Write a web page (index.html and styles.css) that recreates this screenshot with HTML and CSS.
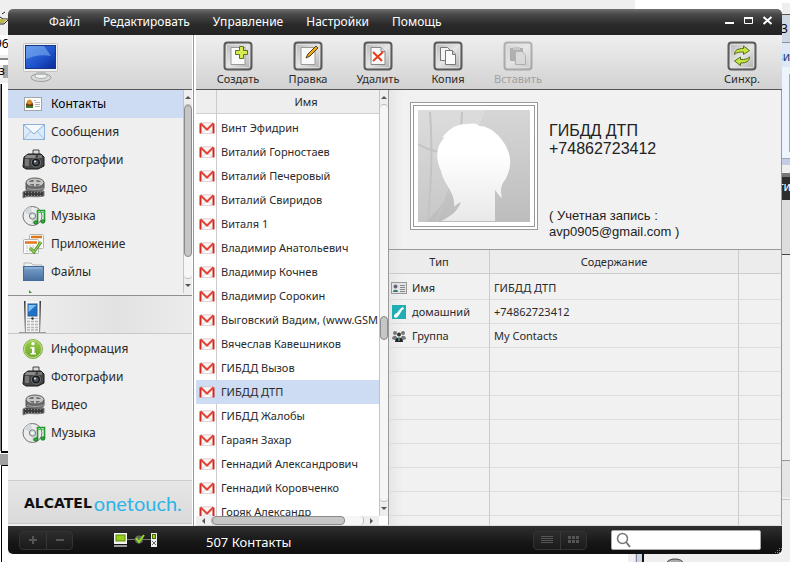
FILE: index.html
```html
<!DOCTYPE html>
<html lang="ru">
<head>
<meta charset="utf-8">
<title>Контакты</title>
<link rel="stylesheet" href="styles.css">
</head>
<body>
<svg class="defs" aria-hidden="true">
  <defs>
    <linearGradient id="gScreen" x1="0" y1="0" x2="1" y2="1"><stop offset="0" stop-color="#3f7fe6"/><stop offset=".6" stop-color="#1c4fc8"/><stop offset="1" stop-color="#0b2a94"/></linearGradient>
    <linearGradient id="gFolder" x1="0" y1="0" x2="0" y2="1"><stop offset="0" stop-color="#7ba0cc"/><stop offset="1" stop-color="#47709f"/></linearGradient>
    <linearGradient id="gTool" x1="0" y1="0" x2="1" y2="1"><stop offset="0" stop-color="#b4b4b4"/><stop offset=".5" stop-color="#e6e6e6"/><stop offset="1" stop-color="#a8a8a8"/></linearGradient>
    <linearGradient id="gPhoto" x1="0" y1="0" x2="0" y2="1"><stop offset="0" stop-color="#d6d6d6"/><stop offset="1" stop-color="#bdbdbd"/></linearGradient>
    <linearGradient id="gHead" x1="0" y1="0" x2="0" y2="1"><stop offset=".3" stop-color="#fff"/><stop offset="1" stop-color="#e9e9e9"/></linearGradient>
    <linearGradient id="gGreen" x1="0" y1="0" x2="0" y2="1"><stop offset="0" stop-color="#9ccc4a"/><stop offset="1" stop-color="#6aa32a"/></linearGradient>
  </defs>
  <symbol id="i-card" viewBox="0 0 24 22"><rect x="2.500" y="4.500" width="17" height="13" fill="#fff" stroke="#a5a5a5"/><rect x="4" y="13" width="7" height="2" fill="#3c7a30"/><path d="M4 13c0-3 1-3 1-5h5c0 2 2 3 1 5z" fill="#6b3a10"/><circle cx="7.500" cy="9" r="2.500" fill="#d98e2b"/><path d="M12 7.500h2m-1 2h5m-5 2h5m-5 2h5" stroke="#b4b4b4"/></symbol>
  <symbol id="i-mail" viewBox="0 0 24 22"><rect x="1.500" y="3.500" width="21" height="15" fill="#dcebf9" stroke="#8db2d8"/><path d="M2 18l7-8m13 8l-7-8" stroke="#a3c3e3" fill="none"/><path d="M2 4l10 9 10-9" fill="#f4f9fe" stroke="#84acd6"/></symbol>
  <symbol id="i-camera" viewBox="0 0 24 22"><path d="M11 5V1h6v4" fill="#ddd" stroke="#444"/><path d="M2 8l4-3h13l3 3v9l-6 3H4l-3-2z" fill="#454745" stroke="#161616"/><path d="M3 8l2-2h9l-1 3H3z" fill="#8a8d8a"/><rect x="3" y="10" width="4" height="7" fill="#777"/><path d="M16 6h4v3h-4z" fill="#777"/><circle cx="14" cy="13.500" r="4.500" fill="#151515" stroke="#777"/><circle cx="14" cy="13.500" r="2.500" fill="#46525e"/><circle cx="13" cy="12.500" r="1" fill="#eee"/></symbol>
  <symbol id="i-film" viewBox="0 0 24 22"><path d="M4 6v6c0 3 18 4 18-1V6z" fill="#6c6d6b" stroke="#555"/><ellipse cx="13" cy="5.500" rx="9" ry="4.500" fill="#c5c7c3" stroke="#5a5a5a"/><path d="M7 5c1-2 3-2 5-2l-1 2zm7-2c3 0 4 1 5 2h-4zM8 7h4v2c-2 0-4-1-4-2zm6 0h4c-1 1-2 2-4 2z" fill="#6c6c6c"/><path d="M5 11c2 2 14 2 17 0" stroke="#a5a5a5" fill="none"/><path d="M1 15c4-3 9 0 21-1v5c-9 2-16-1-21 2z" fill="#3a3a3a" stroke="#7e7e7e"/><path d="M3 15.500c6-1 10 1 18 0M3 19c6-2 10 1 18-1" stroke="#a9a9a9" stroke-dasharray="1 2" fill="none"/></symbol>
  <symbol id="i-music" viewBox="0 0 24 22"><circle cx="10.500" cy="11" r="9.500" fill="#ececec" stroke="#747474"/><path d="M10.500 11L2 7c1-3 4-5 7-5zM10.500 11l7 5c-2 3-5 4-8 3z" fill="#d2d7da"/><circle cx="10.500" cy="11" r="3.200" fill="#cfd5dd" stroke="#848484"/><circle cx="10.500" cy="11" r="1.300" fill="#fff"/><path d="M15.500 17V5.500h7V16" fill="none" stroke="#1f9a2a" stroke-width="1.600"/><path d="M15.500 7.500h7" stroke="#45c84c"/><ellipse cx="13.800" cy="17.500" rx="2" ry="1.600" fill="#2fb137" stroke="#0b7014"/><ellipse cx="20.800" cy="16.500" rx="2" ry="1.600" fill="#2fb137" stroke="#0b7014"/></symbol>
  <symbol id="i-apps" viewBox="0 0 24 22"><rect x="7.500" y="1.500" width="14" height="14" rx="1" fill="#fafafa" stroke="#b5b5b0"/><path d="M9 4h11" stroke="#e07818" stroke-width="2.500"/><rect x="1.500" y="6.500" width="15" height="14" rx="1" fill="#fafafa" stroke="#b5b5b0"/><path d="M3 9.500h12" stroke="#e07818" stroke-width="2.500"/><path d="M4 13h9m-9 2h9m-9 3h5" stroke="#c5c5c0" stroke-dasharray="2 1"/><path d="M8 15l4 4 7-10" fill="none" stroke="#4a8c1c" stroke-width="3"/><path d="M8 15l4 4 7-10" fill="none" stroke="#9ed760" stroke-width="1.200"/></symbol>
  <symbol id="i-folder" viewBox="0 0 24 22"><path d="M2 5V2h7l2 2h9v3" fill="#f2f2f0" stroke="#b5b5b0"/><rect x="1.500" y="5.500" width="20" height="14" fill="url(#gFolder)" stroke="#426a9c"/><path d="M3 7h17" stroke="#a5c2e2"/></symbol>
  <symbol id="i-info" viewBox="0 0 24 22"><circle cx="11" cy="11" r="9.500" fill="url(#gGreen)" stroke="#86b04a"/><circle cx="11" cy="11" r="8.500" fill="none" stroke="#bfe08a"/><circle cx="11" cy="5.800" r="1.700" fill="#fff"/><path d="M8.500 9h4v6h1.500v1.500H8.500V15H10v-4.500H8.500z" fill="#fff"/></symbol>
  <symbol id="i-gmail" viewBox="0 0 16 12"><rect x="1" y="1" width="14" height="10" fill="#f6f6f6"/><path d="M3 11l5-4 5 4" fill="#fff" stroke="#c9c9c9" stroke-width=".8"/><path d="M2 .8h12M3 11.500h10" stroke="#dcc4c2" stroke-width=".8"/><path d="M1.500 11.500V1.500M14.500 1.500v10" stroke="#cf2a20" stroke-width="2"/><path d="M1.500 1.200L8 7.500l6.500-6.300" fill="none" stroke="#e2463a" stroke-width="2"/></symbol>
  <symbol id="tool" viewBox="0 0 30 30"><rect x="1.500" y="1.500" width="27" height="27" rx="3" fill="url(#gTool)" stroke="#5b5b5b" stroke-width="2"/><rect x="3.500" y="3.500" width="23" height="23" rx="1" fill="none" stroke="#dedede"/></symbol>
</svg>

<svg class="behind behind-left" aria-hidden="true" width="8" height="562">
  <rect width="8" height="562" fill="#fff"/><rect width="8" height="35" fill="#efefef"/>
  <path d="M0 17l3 2h5M0 24h4l4-4M2 14l3-2" fill="none" stroke="#222"/><path d="M0 19h7l-3 4H0z" fill="#b9b84d"/>
  <rect y="55" width="8" height="5" fill="#eee"/><rect y="58" width="8" height="2" fill="#888"/><rect y="65" width="8" height="18" fill="#efefef"/><rect x="3" y="65" width="5" height="13" fill="#a6a6a6"/>
  <text x="-5" y="48">96</text><text x="-1" y="75">з</text>
  <rect x="1" y="84" width="1" height="367" fill="#000"/><rect y="84" width="1" height="367" fill="#888"/>
  <rect x="1" y="451" width="7" height="2" fill="#000"/><rect y="454" width="8" height="11" fill="#a0a0a0"/><path d="M1.500 562v-96.500H8" fill="none" stroke="#000"/>
</svg>
<svg class="behind behind-right" aria-hidden="true" width="155" height="562">
  <rect width="155" height="562" fill="#fff"/><rect x="147" y="3" width="8" height="11" fill="#eee"/>
  <rect x="147" y="14" width="8" height="29" fill="#cdd6e1"/><rect x="147" y="14" width="8" height="1" fill="#555"/><rect x="147" y="43" width="8" height="115" fill="#dce8f5"/><rect x="147" y="42" width="8" height="1" fill="#8794a5"/>
  <rect x="147" y="67" width="8" height="92" fill="#edf4fc"/><path d="M154.500 74v78" stroke="#9ab"/><rect x="147" y="159" width="8" height="6" fill="#c3cde2"/><rect x="147" y="158" width="8" height="1" fill="#99a5b8"/>
  <rect x="147" y="165" width="8" height="397" fill="#efefef"/><rect x="147" y="173" width="8" height="27" fill="#2d2d2d"/><rect x="147" y="173" width="8" height="4" fill="#777"/><rect x="147" y="200" width="8" height="54" fill="#ddd"/><rect x="147" y="254" width="8" height="1" fill="#444"/>
  <rect x="147" y="460" width="8" height="1" fill="#999"/><rect x="147" y="461" width="8" height="36" fill="#e5e5e5"/><rect x="147" y="499" width="8" height="1" fill="#c5c5c5"/>
  <text x="146" y="33">3</text><text x="141" y="61" class="blue">ви</text><text x="143" y="191" class="light">ти</text>
  <rect y="554" width="155" height="8" fill="#efefef"/><rect y="554" width="7" height="8" fill="#c9d6ea"/><path d="M1.500 554v8" stroke="#889"/><rect x="7" y="554" width="2" height="8" fill="#111"/><ellipse cx="40" cy="563" rx="8" ry="4" fill="#aaa" stroke="#444"/>
</svg>

<div class="window">
  <header class="titlebar">
    <nav class="menu">
      <button type="button">Файл</button><button type="button">Редактировать</button><button type="button">Управление</button><button type="button">Настройки</button><button type="button">Помощь</button>
    </nav>
    <div class="controls">
      <button type="button" aria-label="Свернуть"><svg width="11" height="9"><path d="M1 7h9" stroke="#fff" stroke-width="2"/></svg></button>
      <button type="button" aria-label="Развернуть"><svg width="11" height="9"><path d="M1.500 1v6.500h8V1" fill="none" stroke="#fff"/><path d="M1 2h9" stroke="#fff" stroke-width="2"/></svg></button>
      <button type="button" aria-label="Закрыть"><svg width="11" height="9"><path d="M1.500 1l8 7m0-7l-8 7" stroke="#fff" stroke-width="2"/></svg></button>
    </div>
  </header>

  <div class="body">
    <aside class="sidebar">
      <div class="device-head">
        <svg width="38" height="42" viewBox="0 0 38 42"><ellipse cx="19" cy="35.500" rx="10" ry="4" fill="#d5d8d9" stroke="#9da0a1"/><ellipse cx="19" cy="34" rx="6" ry="2.500" fill="#f2f2f2" stroke="#aaa"/><path d="M15 29h8l1 4H14z" fill="#b9bcbd"/><rect x="1.500" y="1.500" width="34" height="28" rx="1" fill="#f2f2f2" stroke="#c2c2c2"/><rect x="3.500" y="3.500" width="30" height="23" fill="url(#gScreen)" stroke="#16378a"/><path d="M4 4h18l7 10c-10-2-17 0-25 3z" fill="#8fbcf5" opacity=".5"/></svg>
      </div>
      <div class="nav-scroll">
        <ul class="nav">
          <li><a href="#" class="active"><svg class="ic"><use href="#i-card"/></svg>Контакты</a></li>
          <li><a href="#"><svg class="ic"><use href="#i-mail"/></svg>Сообщения</a></li>
          <li><a href="#"><svg class="ic"><use href="#i-camera"/></svg>Фотографии</a></li>
          <li><a href="#"><svg class="ic"><use href="#i-film"/></svg>Видео</a></li>
          <li><a href="#"><svg class="ic"><use href="#i-music"/></svg>Музыка</a></li>
          <li><a href="#"><svg class="ic"><use href="#i-apps"/></svg>Приложение</a></li>
          <li><a href="#"><svg class="ic"><use href="#i-folder"/></svg>Файлы</a></li>
          <li class="peek"><svg width="6" height="4"><path d="M1 0l4 4H1z" fill="#349534"/></svg></li>
        </ul>
        <div class="vbar"><i class="up"></i><div class="track"><b class="thumb nav-thumb"></b></div><i class="down"></i></div>
      </div>
      <div class="phone-head">
        <svg width="28" height="34" viewBox="0 0 28 34"><path d="M0 32.500h27" stroke="#9b9b9b"/><path d="M5 1h17l-1 31H6z" fill="#333"/><path d="M6.500 1h14v31h-14z" fill="#f4f4f4"/><rect x="9" y="4" width="9" height="12" fill="#1f72c8" stroke="#2a5c98"/><path d="M9.500 5h8l-8 7z" fill="#7cc0f2"/><path d="M8 21.500h11M8 24.500h11M8 27.500h11M8 30h11" stroke="#b4b4b4" stroke-width="1.500" stroke-dasharray="3 1"/><path d="M8 18.500h11" stroke="#bbb"/><circle cx="13.500" cy="18.500" r="1.200" fill="#333"/></svg>
      </div>
      <ul class="nav phone-nav">
        <li><a href="#"><svg class="ic"><use href="#i-info"/></svg>Информация</a></li>
        <li><a href="#"><svg class="ic"><use href="#i-camera"/></svg>Фотографии</a></li>
        <li><a href="#"><svg class="ic"><use href="#i-film"/></svg>Видео</a></li>
        <li><a href="#"><svg class="ic"><use href="#i-music"/></svg>Музыка</a></li>
      </ul>
      <div class="brand"><span class="alcatel">ALCATEL</span><span class="onetouch">onetouch.</span></div>
    </aside>

    <main class="main">
      <div class="toolbar">
        <button type="button"><svg width="30" height="30"><use href="#tool"/><path d="M8 6.500h14v17H8z" fill="#fafafa" stroke="#999"/><path d="M16.500 5.500h4v4h4v4h-4v4h-4v-4h-4v-4h4z" fill="#d7ea52" stroke="#5f7020"/></svg>Создать</button>
        <button type="button"><svg width="30" height="30"><use href="#tool"/><path d="M8 6.500h14v17H8z" fill="#fafafa" stroke="#999"/><path d="M13 17l2-4 8-8 2 2-8 8z" fill="#f0a81c" stroke="#54420f"/></svg>Правка</button>
        <button type="button"><svg width="30" height="30"><use href="#tool"/><path d="M8 6.500h10l4 4v13H8z" fill="#fafafa" stroke="#888"/><path d="M18 6.500v4h4" fill="#ddd" stroke="#888"/><path d="M10 11l9 9m1-9L10 20" stroke="#e8401c" stroke-width="2"/></svg>Удалить</button>
        <button type="button"><svg width="30" height="30"><use href="#tool"/><path d="M7.500 6.500h7l3 3v10h-10z" fill="#f4f4f4" stroke="#777"/><path d="M12.500 9.500h7l3 4v10h-10z" fill="#fafafa" stroke="#777"/><path d="M19.500 9.500v4h3" fill="#ccc" stroke="#777"/></svg>Копия</button>
        <button type="button" disabled><svg width="30" height="30"><use href="#tool"/><path d="M7.500 7.500h12v12h-12z" fill="#666" stroke="#555"/><path d="M10 6h7v3h-7z" fill="#999"/><path d="M12.500 10.500h7l3 4v9h-10z" fill="#ccc" stroke="#666"/></svg>Вставить</button>
        <button type="button" class="sync"><svg width="30" height="30"><use href="#tool"/><path d="M7.500 13.500c0-4 3-6 9-6V5l6 4.500-6 4v-2.500c-4 0-7 0-9 2.500z" fill="#c4e63f" stroke="#586d18"/><path d="M22.500 16c0 4-3 6-9 6v2.500l-6-4.500 6-4v2.500c4 0 7 0 9-2.500z" fill="#c4e63f" stroke="#586d18"/></svg>Синхр.</button>
      </div>
      <div class="content">
        <section class="list">
          <div class="list-area">
            <table class="people">
              <thead><tr><th class="src"></th><th class="title">Имя</th></tr></thead>
              <tbody>
                <tr><td><svg><use href="#i-gmail"/></svg></td><td>Винт Эфидрин</td></tr>
                <tr><td><svg><use href="#i-gmail"/></svg></td><td>Виталий Горностаев</td></tr>
                <tr><td><svg><use href="#i-gmail"/></svg></td><td>Виталий Печеровый</td></tr>
                <tr><td><svg><use href="#i-gmail"/></svg></td><td>Виталий Свиридов</td></tr>
                <tr><td><svg><use href="#i-gmail"/></svg></td><td>Виталя 1</td></tr>
                <tr><td><svg><use href="#i-gmail"/></svg></td><td>Владимир Анатольевич</td></tr>
                <tr><td><svg><use href="#i-gmail"/></svg></td><td>Владимир Кочнев</td></tr>
                <tr><td><svg><use href="#i-gmail"/></svg></td><td>Владимир Сорокин</td></tr>
                <tr><td><svg><use href="#i-gmail"/></svg></td><td>Выговский Вадим, (www.GSM</td></tr>
                <tr><td><svg><use href="#i-gmail"/></svg></td><td>Вячеслав Кавешников</td></tr>
                <tr><td><svg><use href="#i-gmail"/></svg></td><td>ГИБДД Вызов</td></tr>
                <tr class="selected"><td><svg><use href="#i-gmail"/></svg></td><td>ГИБДД ДТП</td></tr>
                <tr><td><svg><use href="#i-gmail"/></svg></td><td>ГИБДД Жалобы</td></tr>
                <tr><td><svg><use href="#i-gmail"/></svg></td><td>Гараян Захар</td></tr>
                <tr><td><svg><use href="#i-gmail"/></svg></td><td>Геннадий Александрович</td></tr>
                <tr><td><svg><use href="#i-gmail"/></svg></td><td>Геннадий Коровченко</td></tr>
                <tr><td><svg><use href="#i-gmail"/></svg></td><td>Горяк Александр</td></tr>
              </tbody>
            </table>
          </div>
          <div class="vbar"><i class="up"></i><div class="track"><b class="thumb list-thumb"></b></div><i class="down"></i></div>
          <div class="hbar"><i class="left"></i><div class="track"><b class="thumb"></b></div><i class="right"></i></div>
        </section>
        <section class="detail">
          <div class="profile">
            <div class="photo"><svg viewBox="0 0 112 112"><rect width="112" height="112" fill="url(#gPhoto)"/><path d="M0 0h67C54 35 42 80 8 112H0z" fill="#fff" opacity=".16"/><path d="M12 2c3 40 1 70-2 108M44 2C42 50 34 80 18 110M0 34c15 9 40 14 60 2" fill="none" stroke="#c3c3c3" stroke-width="2"/><path d="M23 111c9-4 17-10 20-19-4 2-5 3-7 5 2-14-10-22-13-36C17 48 18 36 27 27l-3 1c6-8 13-14 25-14 7-1 10-1 12 2 15 0 29 18 31 32 1 10-2 18-7 25-3 6-2 9-1 15-4-3-5-6-7-8v31z" fill="url(#gHead)"/></svg></div>
            <div class="who">
              <p class="name">ГИБДД ДТП<br>+74862723412</p>
              <p class="account">( Учетная запись :<br>avp0905@gmail.com )</p>
            </div>
          </div>
          <table class="fields">
            <colgroup><col class="c-type"><col><col class="c-end"></colgroup>
            <thead><tr><th>Тип</th><th>Содержание</th><th></th></tr></thead>
            <tbody>
              <tr class="first"><td><span class="kind"><svg width="16" height="14"><rect x=".5" y="1.500" width="15" height="11" fill="#e4e4e4" stroke="#999"/><path d="M2 11c0-3 5-3 5 0z" fill="#377"/><circle cx="4.500" cy="5.500" r="2" fill="#667"/><path d="M9 4.500h5M9 6.500h5M9 8.500h5M9 10.500h5" stroke="#888"/></svg>Имя</span></td><td>ГИБДД ДТП</td><td></td></tr>
              <tr><td><span class="kind"><svg width="16" height="14"><rect x="1" width="14" height="14" fill="#20aeb4"/><path d="M3 12c0-3 1-3 3-4 2-2 3-5 6-6l1 2c-3 1-3 4-5 6-1 2-2 2-3 3z" fill="#fff"/></svg>домашний</span></td><td>+74862723412</td><td></td></tr>
              <tr><td><span class="kind"><svg width="16" height="14"><circle cx="4" cy="4" r="2" fill="#777"/><circle cx="12" cy="4" r="2" fill="#777"/><path d="M1 10c0-4 5-4 5-1h4c0-3 5-3 5 1l-3 1H4z" fill="#777"/><circle cx="8" cy="5.500" r="2" fill="#333"/><path d="M4 13c0-6 8-6 8 0z" fill="#222"/><path d="M8 8v4" stroke="#6cc"/></svg>Группа</span></td><td>My Contacts</td><td></td></tr>
              <tr><td></td><td></td><td></td></tr><tr><td></td><td></td><td></td></tr><tr><td></td><td></td><td></td></tr><tr><td></td><td></td><td></td></tr><tr><td></td><td></td><td></td></tr><tr><td></td><td></td><td></td></tr><tr><td></td><td></td><td></td></tr><tr><td></td><td></td><td></td></tr>
            </tbody>
          </table>
        </section>
      </div>
    </main>
  </div>

  <footer class="status">
    <div class="pair">
      <button type="button" aria-label="Добавить"><svg width="10" height="10"><path d="M5 1v8M1 5h8" stroke="#555" stroke-width="2"/></svg></button><button type="button" aria-label="Убрать"><svg width="10" height="10"><path d="M1 5h8" stroke="#555" stroke-width="2"/></svg></button>
    </div>
    <svg class="link" width="46" height="16"><path d="M14 7.500h26" stroke="#777"/><rect x="1" y="1" width="13" height="11" fill="#f4f4f4"/><rect x="3" y="3" width="9" height="6" fill="#98cf1b" stroke="#5b8a0c"/><path d="M1 14h13" stroke="#999" stroke-width="2"/><circle cx="26" cy="7.500" r="4" fill="#666"/><path d="M23 6l3 4 5-7" fill="none" stroke="#8fe01a" stroke-width="2"/><rect x="38" y="1" width="6" height="14" fill="#eee"/><rect x="39.500" y="2.500" width="3" height="4" fill="#98cf1b" stroke="#467008"/><path d="M39 9l4 4m0-4l-4 4" stroke="#666"/></svg>
    <span class="count">507 Контакты</span>
    <div class="pair views">
      <button type="button" aria-label="Список"><svg width="12" height="8"><path d="M0 .5h12M0 2.500h12M0 4.500h12M0 6.500h12" stroke="#555"/></svg></button><button type="button" aria-label="Сетка"><svg width="11" height="8"><path d="M0 1.500h11M0 5.500h11" stroke="#555" stroke-width="3" stroke-dasharray="3 1"/></svg></button>
    </div>
    <label class="search"><svg width="16" height="16"><circle cx="6.500" cy="6.500" r="5" fill="none" stroke="#777" stroke-width="1.500"/><path d="M10 10l4 5" stroke="#777" stroke-width="2"/></svg><input type="search" aria-label="Поиск"></label>
    <svg class="grip" width="8" height="8"><path d="M1 6.500h7M3 4.500h5M5 2.500h3" stroke="#888" stroke-dasharray="1 1"/></svg>
  </footer>
</div>
</body>
</html>
```
FILE: styles.css
```css
* { box-sizing: border-box; }
body {
  margin: 0;
  height: 100vh;
  padding: 9px 8px 8px;
  background: #efefef;
  font: 11px/16px "Noto Sans", "Open Sans", sans-serif;
  color: #2a2a2a;
  overflow: hidden;
  position: relative;
}
p, ul { margin: 0; padding: 0; }
li { list-style: none; }
button { border: 0; padding: 0; background: none; font: inherit; color: inherit; }
svg { display: block; flex: none; }
.defs { position: absolute; width: 0; height: 0; }
.behind { position: absolute; top: 0; font: 12px "Noto Sans", sans-serif; }
.behind-left { left: 0; }
.behind-right { right: 0; }
.behind .blue { fill: #28417f; }
.behind .light { fill: #fff; }
body::after {
  content: "";
  position: absolute;
  left: 8px;
  right: 162px;
  bottom: 0;
  height: 8px;
  background: #fff;
}

.window {
  position: relative;
  height: 100%;
  display: flex;
  flex-direction: column;
  border-radius: 5px;
  overflow: hidden;
  background: #efefef;
}
.titlebar {
  flex: none;
  height: 26px;
  display: flex;
  justify-content: space-between;
  padding: 0 9px 0 41px;
  background: linear-gradient(#707070, #4a4a4a 20%, #2a2a2a 60%, #232323);
  color: #fff;
  font-size: 12px;
}
.menu { display: flex; gap: 23px; }
.controls { display: flex; gap: 8px; padding-bottom: 4px; }
.controls svg { width: 11px; }

.body { flex: 1; min-height: 0; display: flex; background: #fff; }
.sidebar {
  flex: none;
  width: 186px;
  display: flex;
  flex-direction: column;
  background: #efefef;
  border-right: 1px solid #999;
  box-shadow: inset -1px 0 #fff;
  margin-right: 2px;
  padding: 0 1px 2px 0;
}
.device-head {
  flex: none;
  height: 55px;
  padding: 7px 14px;
  background: linear-gradient(#ededed, #d4d4d4);
  border-bottom: 1px solid #555;
}
.nav-scroll { flex: none; height: 203px; display: flex; overflow: hidden; }
.nav { flex: 1; font-size: 12px; }
.nav a {
  display: flex;
  align-items: center;
  gap: 5px;
  height: 28px;
  padding-left: 14px;
  color: #2a2a2a;
  text-decoration: none;
}
.nav a.active { background: #cddcf2; color: #000; }
.ic { width: 24px; height: 22px; }
.peek { padding: 4px 20px; }
.phone-head {
  flex: none;
  height: 40px;
  margin-top: 2px;
  padding: 4px 11px 0;
  background: linear-gradient(90deg, #efefef, #e2e2e2 60%, #ececec);
  border-top: 1px solid #8e8e8e;
  border-bottom: 1px solid #efefef;
  box-shadow: inset 0 -1px #c9c9c9;
}
.phone-nav { flex: none; margin-bottom: auto; }
.brand {
  flex: none;
  display: flex;
  align-items: center;
  gap: 2px;
  height: 44px;
  padding: 2px 0 0 16px;
  border-top: 1px solid #ccc;
  border-bottom: 1px solid #c6c6c6;
  background: linear-gradient(#e6e6e6, #dadada);
  white-space: nowrap;
}
.alcatel { font: bold 14px/24px "DejaVu Sans", sans-serif; color: #111; }
.onetouch { font: 20px/24px Lato, sans-serif; color: #2db4e8; }

.vbar { flex: none; width: 9px; display: flex; flex-direction: column; background: #eee; border-left: 1px solid #c4c4c4; }
.vbar i, .hbar i { flex: none; width: 0; height: 0; border: 3px solid transparent; }
.vbar .up { margin: 6px 1px 5px; border-top: 0; border-bottom-color: #555; }
.vbar .down { margin: 5px 1px 6px; border-bottom: 0; border-top-color: #555; }
.track { flex: 1; background: #f6f6f6; border: 1px solid #bbb; border-radius: 4px; min-width: 0; }
.vbar .track { border-width: 1px 0; }
.thumb { display: block; background: #c6c6c6; border: 1px solid #8b8b8b; border-radius: 4px; }
.nav-thumb { height: 88%; }
.list-thumb { height: 24px; margin-top: 211px; }

.main { flex: 1; min-width: 0; display: flex; flex-direction: column; border-bottom: 1px solid #ddd; }
.toolbar {
  flex: none;
  height: 55px;
  display: flex;
  padding: 6px 5px 0 7px;
  background: linear-gradient(#efefef, #d2d2d2);
  border-bottom: 1px solid #555;
}
.toolbar button { width: 70px; display: flex; flex-direction: column; align-items: center; line-height: 16px; }
.toolbar button:disabled { color: #a0a0a0; }
.toolbar button:disabled svg { opacity: .4; }
.toolbar .sync { margin-left: auto; }

.content { flex: 1; min-height: 0; display: flex; background: #f1f1f1; }
.list {
  flex: none;
  width: 193px;
  display: grid;
  grid-template: minmax(0, 1fr) 9px / minmax(0, 1fr) 9px;
  background: #fff;
  border-right: 1px solid #999;
}
.list-area { overflow: hidden; }
table { width: 100%; border-collapse: separate; border-spacing: 0; table-layout: fixed; }
th { font-weight: normal; }
.people th { height: 26px; padding: 0 0 2px; background: linear-gradient(#eee 23px, #d0d0d0 23px, #d0d0d0 24px, #fff 24px); }
.people .title { padding-left: 16px; }
.people .src { width: 21px; }
.people th:first-child, .people td:first-child { border-right: 1px solid #ccc; }
.people td { height: 24px; padding: 0 0 0 4px; white-space: nowrap; overflow: hidden; }
.people td:first-child { padding-left: 3px; }
.people td svg { width: 16px; height: 12px; }
.people .selected td { background: #cddcf2; border-color: #cddcf2; }
.hbar { display: flex; align-items: center; background: #eee; height: 9px; }
.hbar .left { border-left: 0; border-right-color: #555; margin: 0 6px; }
.hbar .right { border-right: 0; border-left-color: #555; margin: 0 6px; }
.hbar .track { height: 9px; border-width: 0 1px; }
.hbar .thumb { height: 9px; width: 88%; }

.detail { flex: 1; min-width: 0; overflow: hidden; border-right: 1px solid #999; background: linear-gradient(90deg, #e6e6e6, #f1f1f1 14px); }
.profile { height: 160px; display: flex; padding: 12px 20px 0 21px; border-bottom: 1px solid #999; }
.photo { width: 128px; height: 128px; padding: 4px; border: 4px double #999; background: #fff; }
.who { padding-left: 11px; font-family: "Liberation Sans", Arial, sans-serif; color: #222; }
.name { font-size: 16px; line-height: 18px; padding-top: 20px; }
.account { font-size: 13px; line-height: 16px; padding-top: 50px; }
.c-type { width: 101px; }
.c-end { width: 42px; }
.fields th { height: 24px; padding: 0; background: rgba(230, 230, 230, .4); border-bottom: 1px solid #ccc; }
.fields td { height: 24px; padding: 0 0 0 4px; border-bottom: 1px solid #ddd; }
.fields .first td { height: 26px; padding-top: 2px; }
.fields td:first-child { padding-left: 2px; }
.fields th:not(:last-child), .fields td:not(:last-child) { border-right: 1px solid #ccc; }
.kind { display: flex; align-items: center; gap: 5px; }

.status {
  flex: none;
  height: 28px;
  display: flex;
  align-items: center;
  padding: 0 0 0 11px;
  background: linear-gradient(#2f2f2f, #161616 60%, #101010);
}
.pair { display: flex; border: 1px solid #333; border-radius: 4px; background: linear-gradient(#2c2c2c, #1a1a1a); }
.pair button { width: 26px; height: 17px; display: grid; place-items: center; }
.pair button + button { border-left: 1px solid #383838; }
.link { margin-left: 40px; }
.count { margin: 4px auto 0 47px; color: #fff; font-size: 13px; }
.search { display: flex; align-items: center; width: 150px; height: 20px; margin: 0 13px 0 24px; padding-left: 4px; background: #fff; border: 1px solid #aaa; border-radius: 2px; }
.search input { flex: 1; min-width: 0; height: 16px; border: 0; padding: 0 2px; background: none; font: inherit; outline: 0; }
.grip { align-self: flex-end; }
```
